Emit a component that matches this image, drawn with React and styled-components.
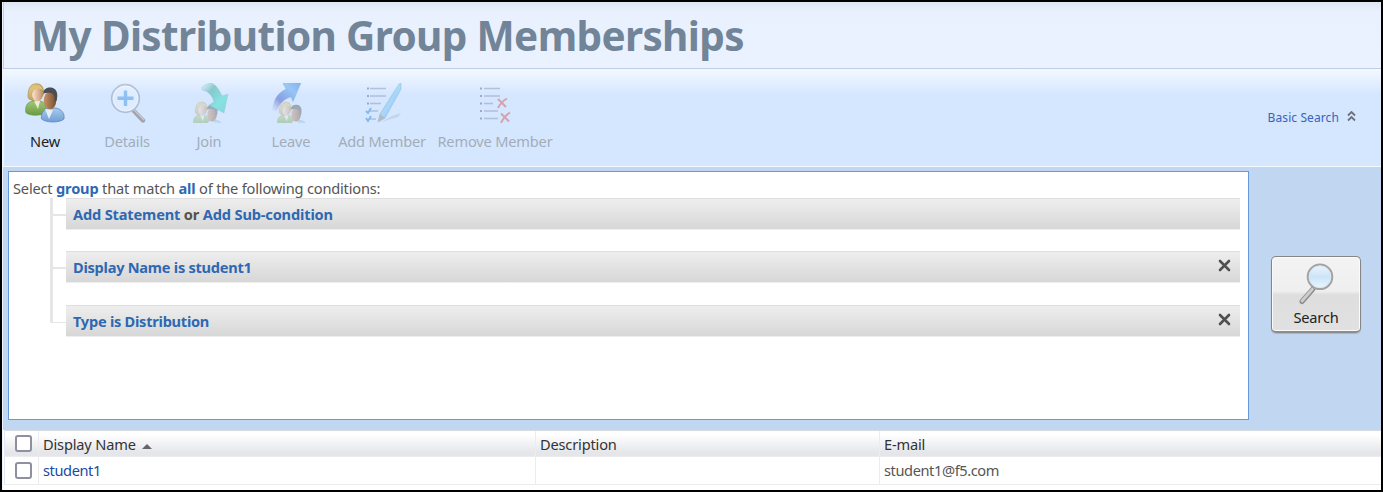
import React from "react";
import styled, { createGlobalStyle } from "styled-components";

const GlobalStyle = createGlobalStyle`
  *, *::before, *::after { box-sizing: border-box; }
  body { margin: 0; overflow: hidden; font-family: "Noto Sans", "Open Sans", sans-serif; font-size: 14.6px; letter-spacing: -0.17px; color: #444; }
`;

const Frame = styled.main`
  width: 1383px;
  height: 492px;
  border: 2px solid #000;
  background: #fff;
  display: flex;
  flex-direction: column;
`;
const Inner = styled.div`
  flex: 1;
  display: flex;
  flex-direction: column;
  border-left: 1px solid #edf3fc;
`;
const Header = styled.header`
  height: 67px;
  padding-left: 27px;
  border-left: 1px solid #c3cfe3;
  border-bottom: 1px solid #bfcee6;
  background: linear-gradient(#dde6f2 0, #e9f1fe 10px, #eaf2ff 100%);
`;
const Title = styled.h1`
  margin: 0;
  font-size: 40.5px;
  line-height: 68px;
  font-weight: 700;
  letter-spacing: -0.65px;
  color: #718498;
  white-space: nowrap;
`;
const Toolbar = styled.nav`
  height: 98px;
  display: flex;
  border-left: 1px solid #eef5ff;
  border-bottom: 1px solid #f4f9ff;
  background: linear-gradient(#f3f9ff 0, #e6f1ff 11px, #d5e6ff 26px, #d5e7ff 100%);
`;
const Tool = styled.button`
  width: ${(p) => p.$width || 82}px;
  padding: 14px 0 0;
  border: 0;
  background: none;
  display: flex;
  flex-direction: column;
  align-items: center;
  font: inherit;
  letter-spacing: inherit;
  color: ${(p) => (p.$disabled ? "#a3adb9" : "#222")};
  svg { display: block; opacity: ${(p) => (p.$disabled ? 0.47 : 1)}; }
`;
const ToolLabel = styled.span`
  margin-top: 8px;
  line-height: 20px;
  white-space: nowrap;
`;
const BasicLink = styled.a`
  margin-left: auto;
  margin-top: 39px;
  padding-right: 25px;
  height: 20px;
  display: flex;
  align-items: flex-start;
  gap: 8px;
  font-size: 12px;
  line-height: 20px;
  letter-spacing: 0.1px;
  color: #3862bd;
  svg { margin-top: 2px; }
`;
const SearchArea = styled.section`
  height: 263px;
  padding: 4px 0 9px 5px;
  display: flex;
  background: #c1d6f1;
`;
const Builder = styled.div`
  width: 1241px;
  height: 249px;
  border: 1px solid #6599dc;
  background: #fff;
  padding: 6px 8px 0 4px;
`;
const Sentence = styled.p`
  margin: 0;
  height: 20px;
  line-height: 20px;
  letter-spacing: -0.18px;
  color: #555;
`;
const Strong = styled.b`
  font-weight: 700;
  color: ${(p) => (p.$plain ? "#55524a" : "#2e68b2")};
`;
const Row = styled.div`
  height: ${(p) => p.$height}px;
  padding-left: 37px;
  display: flex;
  align-items: flex-start;
`;
const Rail = styled.div`
  width: 16px;
  height: ${(p) => (p.$last ? "18px" : "100%")};
  border-left: 3px solid #e6e6e6;
  display: flex;
`;
const Stub = styled.i`
  width: 13px;
  height: ${(p) => (p.$last ? 1 : 2)}px;
  margin-top: ${(p) => (p.$last ? 17 : 16)}px;
  background: #e6e6e6;
`;
const Bar = styled.div`
  flex: 1;
  height: 32px;
  padding: 0 9px 0 7px;
  display: flex;
  justify-content: space-between;
  border-top: 1px solid #dedede;
  border-bottom: 1px solid #eeeeee;
  background: linear-gradient(#eeeeee, #d7d7d7);
  line-height: 30px;
  letter-spacing: -0.24px;
  svg { margin-top: 7px; }
`;
const BarText = styled.span`
  white-space: nowrap;
  letter-spacing: ${(p) => (p.$wide ? -0.16 : -0.26)}px;
`;
const SearchButton = styled.button`
  width: 90px;
  height: 77px;
  margin: 85px 0 0 22px;
  padding: 6px 0 0;
  border: 1px solid #858585;
  border-bottom: 2px solid #8c8c8c;
  border-radius: 5px;
  box-shadow: inset 0 0 0 1px #fbfbfb, 0 1px 1px #a8b5c8;
  background: linear-gradient(#f3f3f3 0, #efefef 46%, #dedede 51%, #e1e1e1 100%);
  display: flex;
  flex-direction: column;
  align-items: center;
  font: inherit;
  letter-spacing: inherit;
  color: #222;
`;
const SearchLabel = styled.span`
  line-height: 20px;
  margin-top: 2px;
`;
const Table = styled.div`
  margin-left: 1px;
  border-left: 1px solid #e3e9f3;
`;
const TableRow = styled.div`
  display: grid;
  grid-template-columns: 34px 497px 344px 1fr;
  height: ${(p) => (p.$head ? 27 : 28)}px;
  color: ${(p) => (p.$head ? "#333" : "#555")};
  border-bottom: 1px solid #ececee;
  border-top: ${(p) => (p.$head ? "1px solid #d6dae2" : "0")};
  background: ${(p) => (p.$head ? "linear-gradient(#ffffff 15%, #e5e6ea 85%)" : "#fff")};
`;
const Cell = styled.div`
  display: flex;
  align-items: center;
  padding-bottom: ${(p) => (p.$check || p.$head ? 0 : 2)}px;
  padding-left: ${(p) => (p.$check ? 10 : 4)}px;
  border-right: ${(p) => (p.$end ? "0" : "1px solid #ececee")};
  letter-spacing: ${(p) => (p.$head ? -0.17 : -0.4)}px;
  color: ${(p) => (p.$link ? "#174ba3" : "inherit")};
  line-height: 20px;
`;
const Check = styled.span`
  width: 17px;
  height: 17px;
  border: 2px solid #8f8f9d;
  border-radius: 3px;
  background: #fff;
`;
const SortMark = styled.i`
  margin: 5px 0 0 6px;
  border: 5px solid transparent;
  border-top: 0;
  border-bottom: 5px solid #666;
`;

const Defs = () => (
  <defs>
    <linearGradient id="hair" x1="0" y1="0" x2="1" y2="1"><stop stopColor="#eed392" /><stop offset="1" stopColor="#a08440" /></linearGradient>
    <linearGradient id="green" x1="0" y1="0" x2="0" y2="1"><stop stopColor="#a4c877" /><stop offset="1" stopColor="#6a9a42" /></linearGradient>
    <linearGradient id="blue" x1="0" y1="0" x2="0" y2="1"><stop stopColor="#a9cbed" /><stop offset="1" stopColor="#6f9fd4" /></linearGradient>
    <linearGradient id="skin" x1="0" y1="0" x2="1" y2="0"><stop stopColor="#fbe3d0" /><stop offset="1" stopColor="#c99573" /></linearGradient>
    <linearGradient id="tan" x1="0" y1="0" x2="1" y2="0"><stop stopColor="#c99268" /><stop offset="1" stopColor="#77502f" /></linearGradient>
    <linearGradient id="join" x1="0" y1="0" x2="1" y2="1"><stop stopColor="#4bb7a8" stopOpacity="0" /><stop offset=".3" stopColor="#2aa692" /><stop offset=".65" stopColor="#32dfc2" /><stop offset="1" stopColor="#2ac5ae" /></linearGradient>
    <linearGradient id="leave" x1="0" y1="1" x2="1" y2="0"><stop stopColor="#5356ba" stopOpacity="0" /><stop offset=".3" stopColor="#3550bf" /><stop offset=".7" stopColor="#4b9ff0" /><stop offset="1" stopColor="#226fcc" /></linearGradient>
    <linearGradient id="pen" x1="0" y1="0" x2="1" y2="1"><stop stopColor="#347fc2" /><stop offset=".5" stopColor="#77c8f5" /><stop offset="1" stopColor="#267bbb" /></linearGradient>
  </defs>
);

const Pair = () => (
  <g>
    <path d="M.8 29.5C0 22 3 19 8 18H15C20 19 22 23 21 30C15 33 4 33 .8 29.5Z" fill="url(#green)" stroke="#699244" strokeWidth=".7" />
    <path d="M9 18L13 26L15 18Z" fill="#e8efd4" />
    <path d="M3 14C3 6 5 1 11 .8C17 .4 19 5 18.5 11L16 16L9 18L4 16Z" fill="url(#hair)" stroke="#a48642" strokeWidth=".6" />
    <ellipse cx="12" cy="12" rx="4.8" ry="6.3" fill="url(#skin)" />
    <path d="M6.5 9C8 5 14 5 18 7L16.5 4C13 1 7 1 5.5 6Z" fill="#dfc27a" />
    <path d="M16.5 36C15.5 29 20 25 25 25H31C36 26 40 30 39 36C35 40 21 40 16.5 36Z" fill="url(#blue)" stroke="#5680b5" strokeWidth=".7" />
    <path d="M20 26L24 36L28 27Z" fill="#e4eefb" />
    <ellipse cx="25" cy="17.5" rx="6.3" ry="8.8" fill="url(#tan)" />
    <path d="M18.5 10.5C18 6 22 4.2 26 4.4C32 5 33.5 11 31.5 18L29.5 18C30 14 29 12 27.5 10.5C25 9.5 22 9.5 18.5 10.5Z" fill="#4a4d51" />
  </g>
);

const NewIcon = () => <svg width="40" height="40" viewBox="0 0 40 40"><Defs /><Pair /></svg>;

const DetailsIcon = () => (
  <svg width="40" height="40" viewBox="0 0 40 40">
    <path d="M27 28L36 37.5" stroke="#6e5850" strokeWidth="4.4" strokeLinecap="round" />
    <path d="M27.5 27.3L36.5 36.5" stroke="#b9a7a1" strokeWidth="1.3" strokeLinecap="round" />
    <circle cx="18.5" cy="15.5" r="13.8" fill="#e9f4ff" stroke="#8a94a8" strokeWidth="1.7" />
    <circle cx="18.5" cy="15.5" r="12.3" fill="none" stroke="#fff" strokeWidth="1" />
    <path d="M18.5 7.5V23M10.5 15.3H26.5" stroke="#4396e9" strokeWidth="3.4" />
  </svg>
);

const JoinIcon = () => (
  <svg width="40" height="40" viewBox="0 0 40 40">
    <g transform="translate(4 18.5) scale(.76)" opacity=".8"><Pair /></g>
    <path d="M13 4C16 2 19 0 23 0C28 3 31 8 33 13L39 11L35 30L20 22L25 19C23 12 19 8 13 7Z" fill="url(#join)" stroke="#278f86" strokeOpacity=".35" strokeWidth=".8" />
  </svg>
);

const LeaveIcon = () => (
  <svg width="40" height="40" viewBox="0 0 40 40">
    <path d="M2 27C2 16 7 10 15 6L12 1V0H30L22 19L20 14C13 16 9 20 6 27Z" fill="url(#leave)" stroke="#4470b2" strokeOpacity=".3" strokeWidth=".6" />
    <g transform="translate(6 18.5) scale(.76)" opacity=".85"><Pair /></g>
  </svg>
);

const AddIcon = () => (
  <svg width="40" height="40" viewBox="0 0 40 40">
    <path d="M8 5.5H24M8 13H24M8 20.5H19M8 28H16M8 36H14" stroke="#8d91b1" strokeWidth="1.6" />
    <path d="M5 5.5H7M5 13H7M5 20.5H7" stroke="#5f6485" strokeWidth="2.2" />
    <path d="M4 28L6 30L9 25M4 35L6 38L9 33" stroke="#2187dd" strokeWidth="1.8" fill="none" />
    <path d="M19 39L30 33L39 30L36 34Z" fill="#8993aa" opacity=".45" />
    <path d="M16 39L18 31L37 1L39 0V6L23 35Z" fill="url(#pen)" stroke="#3f86b7" strokeWidth=".5" />
    <path d="M16 39L18 31L23 35Z" fill="#92877e" />
  </svg>
);

const RemoveIcon = () => (
  <svg width="40" height="40" viewBox="0 0 40 40">
    <path d="M9 5.5H25M9 13H25M9 20.5H18M9 28H23M9 35.5H23" stroke="#8d91b1" strokeWidth="1.6" />
    <path d="M5 5.5H7M5 13H7M5 20.5H7M5 28H7M5 35.5H7" stroke="#5f6485" strokeWidth="2.2" />
    <path d="M23 16L31 24M32 15.5Q26 19 23 25M26 30.5L34 38.5M35 29.5Q29 33 26 40" fill="none" stroke="#cf5a5a" strokeWidth="2" />
  </svg>
);

const SearchIcon = () => (
  <svg width="40" height="42" viewBox="0 0 40 42">
    <defs>
      <linearGradient id="glass" x1="0" y1="0" x2="0" y2="1"><stop stopColor="#eef7ff" /><stop offset=".5" stopColor="#cbe4f8" /><stop offset="1" stopColor="#edf9ff" /></linearGradient>
    </defs>
    <path d="M17 26L6 38.5" stroke="#8d8d8d" strokeWidth="5" strokeLinecap="round" />
    <path d="M16.5 26L6 38" stroke="#cdcdcd" strokeWidth="2.8" strokeLinecap="round" />
    <circle cx="24" cy="13.8" r="12.3" fill="url(#glass)" stroke="#a0a2a5" strokeWidth="2" />
    <circle cx="24" cy="13.8" r="10.8" fill="none" stroke="#dce5ed" strokeWidth="1" />
  </svg>
);

const Close = () => (
  <svg width="13" height="13" viewBox="0 0 13 13">
    <path d="M2 2L11 11M11 2L2 11" stroke="#505050" strokeWidth="2.6" strokeLinecap="round" />
  </svg>
);

const tools = [
  { label: "New", icon: NewIcon, enabled: true },
  { label: "Details", icon: DetailsIcon },
  { label: "Join", icon: JoinIcon },
  { label: "Leave", icon: LeaveIcon },
  { label: "Add Member", icon: AddIcon, width: 100 },
  { label: "Remove Member", icon: RemoveIcon, width: 126 },
];

export default function App() {
  return (
    <>
      <GlobalStyle />
      <Frame>
        <Inner>
          <Header><Title>My Distribution Group Memberships</Title></Header>
          <Toolbar>
            {tools.map(({ label, icon: Icon, enabled, width }) => (
              <Tool key={label} $width={width} $disabled={!enabled}>
                <Icon />
                <ToolLabel>{label}</ToolLabel>
              </Tool>
            ))}
            <BasicLink>
              <span>Basic Search</span>
              <svg width="9" height="12" viewBox="0 0 9 12">
                <path d="M1 5.5L4.5 2L8 5.5M1 10.5L4.5 7L8 10.5" fill="none" stroke="#69727e" strokeWidth="1.8" />
              </svg>
            </BasicLink>
          </Toolbar>
          <SearchArea>
            <Builder>
              <Sentence>Select <Strong>group</Strong> that match <Strong>all</Strong> of the following conditions:</Sentence>
              <Row $height={53}>
                <Rail><Stub /></Rail>
                <Bar><BarText $wide><Strong>Add Statement</Strong> <Strong $plain>or</Strong> <Strong>Add Sub-condition</Strong></BarText></Bar>
              </Row>
              <Row $height={54}>
                <Rail><Stub /></Rail>
                <Bar><BarText><Strong>Display Name is student1</Strong></BarText><Close /></Bar>
              </Row>
              <Row $height={32}>
                <Rail $last><Stub $last /></Rail>
                <Bar><BarText><Strong>Type is Distribution</Strong></BarText><Close /></Bar>
              </Row>
            </Builder>
            <SearchButton><SearchIcon /><SearchLabel>Search</SearchLabel></SearchButton>
          </SearchArea>
          <Table>
            <TableRow $head>
              <Cell $check><Check /></Cell>
              <Cell $head>Display Name<SortMark /></Cell>
              <Cell $head>Description</Cell>
              <Cell $head $end>E-mail</Cell>
            </TableRow>
            <TableRow>
              <Cell $check><Check /></Cell>
              <Cell $link>student1</Cell>
              <Cell />
              <Cell $end>student1@f5.com</Cell>
            </TableRow>
          </Table>
        </Inner>
      </Frame>
    </>
  );
}
